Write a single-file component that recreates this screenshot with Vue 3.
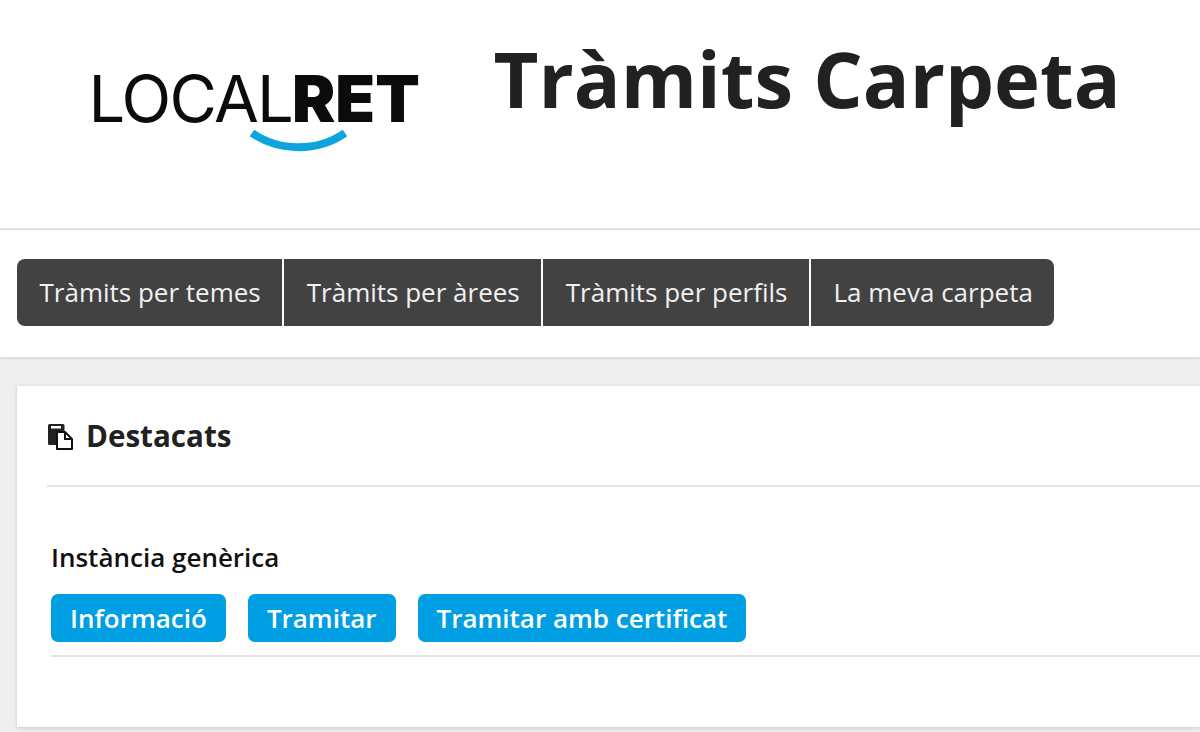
<script setup>
const tabs = ['Tràmits per temes', 'Tràmits per àrees', 'Tràmits per perfils', 'La meva carpeta']
const actions = ['Informació', 'Tramitar', 'Tramitar amb certificat']
</script>

<template>
  <div class="page">
    <header class="top">
      <div class="logo">
        <div class="wordmark"><span class="light">LOCAL</span><span class="heavy">RET</span></div>
        <svg class="smile" width="100" height="26" viewBox="0 0 100 26" aria-hidden="true">
          <path d="M3 3 C 30 22, 69 22, 96 3" fill="none" stroke="#0ea5de" stroke-width="8" />
        </svg>
      </div>
      <h1 class="title">Tràmits Carpeta</h1>
    </header>

    <nav class="navbar">
      <div class="tabs">
        <a v-for="t in tabs" :key="t" class="tab">{{ t }}</a>
      </div>
    </nav>

    <main class="content">
      <section class="card">
        <div class="card-head">
          <svg class="icon" width="27" height="27" viewBox="0 0 27 27" aria-hidden="true">
            <path d="M1 2.5 A1.5 1.5 0 0 1 2.500 1 H16 A1.500 1.500 0 0 1 17.500 2.500 V8 H11 V22 H2.500 A1.500 1.500 0 0 1 1 20.500 Z" fill="#222" />
            <rect x="4" y="3" width="10" height="2.500" fill="#fff" />
            <path d="M10 9 H18 L25 16 V26 H10 Z" fill="#fff" stroke="#111" stroke-width="2" stroke-linejoin="round" />
            <path d="M18 9 V16 H25" fill="none" stroke="#111" stroke-width="2" />
          </svg>
          <h2 class="card-title">Destacats</h2>
        </div>
        <div class="item">
          <div class="item-name">Instància genèrica</div>
          <div class="actions">
            <a v-for="a in actions" :key="a" class="btn">{{ a }}</a>
          </div>
        </div>
      </section>
    </main>
  </div>
</template>

<style>
html, body { margin: 0; background: #fff; overflow: hidden; }
</style>

<style scoped>
.page {
  width: 1200px;
  height: 732px;
  overflow: hidden;
  font-family: "Open Sans", "Noto Sans", sans-serif;
  background: #eee;
}
.top {
  height: 228px;
  background: #fff;
  border-bottom: 2px solid #e4e4e6;
  display: flex;
  align-items: flex-start;
}
.logo {
  width: 493.500px;
  padding: 62px 0 0 88.500px;
  box-sizing: border-box;
  display: flex;
  flex-direction: column;
}
.wordmark {
  font-family: Inter, "Liberation Sans", sans-serif;
  font-size: 65px;
  line-height: 74px;
  letter-spacing: -1.800px;
  color: #0b0b0b;
  white-space: nowrap;
}
.light { font-weight: 400; }
.heavy { font-weight: 900; letter-spacing: 0; }
.smile { margin: -6px 0 0 160px; display: block; }
.title {
  margin: 26px 0 0;
  font-size: 77.700px;
  line-height: 104px;
  font-weight: 700;
  color: #212121;
  white-space: nowrap;
}
.navbar {
  height: 127px;
  box-sizing: border-box;
  padding: 29px 0 0 17px;
  background: #fff;
  box-shadow: 0 1px 3px rgba(0, 0, 0, 0.12);
  position: relative;
}
.tabs {
  display: inline-flex;
  height: 67px;
  background: #424242;
  border-radius: 8px;
  overflow: hidden;
}
.tab {
  display: flex;
  align-items: center;
  padding: 0 21.500px 2px 22.500px;
  color: #f1f1f1;
  font-size: 26px;
  white-space: nowrap;
  border-right: 2px solid #fff;
}
.tab:last-child { border-right: 0; }
.content { padding: 29px 0 0 17px; }
.card {
  height: 341px;
  box-sizing: border-box;
  background: #fff;
  padding: 0 0 0 30px;
  box-shadow: 0 1px 4px rgba(0, 0, 0, 0.16);
}
.card-head {
  height: 101px;
  box-sizing: border-box;
  border-bottom: 2px solid #e4e4e6;
  display: flex;
  align-items: center;
  gap: 12px;
}
.icon { display: block; margin-top: 2px; }
.card-title {
  margin: 0;
  font-size: 29.600px;
  font-weight: 700;
  color: #212121;
}
.item {
  margin: 49px 0 0 4px;
  padding-bottom: 13px;
  border-bottom: 2px solid #e4e4e6;
}
.item-name {
  font-size: 26px;
  line-height: 42px;
  font-weight: 600;
  color: #111;
  -webkit-font-smoothing: antialiased;
}
.actions {
  display: flex;
  gap: 22px;
  margin-top: 16px;
}
.btn {
  height: 48px;
  display: flex;
  align-items: center;
  padding: 0 19px;
  background: #009fe3;
  color: #fff;
  border-radius: 7px;
  font-size: 26px;
  font-weight: 600;
  white-space: nowrap;
}
</style>
